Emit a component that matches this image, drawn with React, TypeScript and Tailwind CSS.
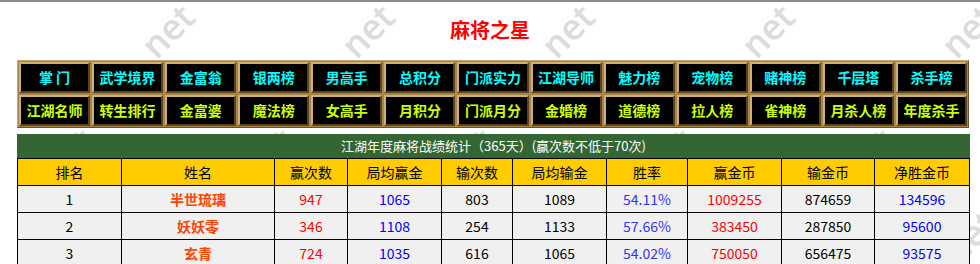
import React from "react";

const navTop = ["掌 门", "武学境界", "金富翁", "银两榜", "男高手", "总积分", "门派实力", "江湖导师", "魅力榜", "宠物榜", "赌神榜", "千层塔", "杀手榜"];
const navBottom = ["江湖名师", "转生排行", "金富婆", "魔法榜", "女高手", "月积分", "门派月分", "金婚榜", "道德榜", "拉人榜", "雀神榜", "月杀人榜", "年度杀手"];

const heads = ["排名", "姓名", "赢次数", "局均赢金", "输次数", "局均输金", "胜率", "赢金币", "输金币", "净胜金币"];

const rows = [
  { rank: 1, name: "半世琉璃", win: 947, avgWin: 1065, lose: 803, avgLose: 1089, rate: "54.11%", winGold: 1009255, loseGold: 874659, net: 134596 },
  { rank: 2, name: "妖妖零", win: 346, avgWin: 1108, lose: 254, avgLose: 1133, rate: "57.66%", winGold: 383450, loseGold: 287850, net: 95600 },
  { rank: 3, name: "玄青", win: 724, avgWin: 1035, lose: 616, avgLose: 1065, rate: "54.02%", winGold: 750050, loseGold: 656475, net: 93575 },
];

// faint diagonal "net" watermarks behind the page
const marks = [
  { x: 160, y: 26 }, { x: 360, y: 26 }, { x: 560, y: 26 }, { x: 760, y: 26 }, { x: 960, y: 26 },
  { x: 60, y: 150 }, { x: 260, y: 150 }, { x: 460, y: 150 }, { x: 660, y: 150 }, { x: 860, y: 150 }, { x: 962, y: 232 },
];

const NavCell = ({ label, color }: { label: string; color: string }) => (
  <div className="h-[31px] bg-black border-2 border-t-[#d0b070] border-l-[#d0b070] border-b-[#5c4420] border-r-[#5c4420] flex items-center justify-center">
    <span className={`text-[14px] font-bold whitespace-nowrap ${color}`}>{label}</span>
  </div>
);

const cell = "h-[27px] border-r border-b border-black flex items-center justify-center";

export default function App() {
  return (
    <div
      className="relative w-[980px] h-[264px] overflow-hidden bg-white border-t-2 border-[#8c8c8c]"
      style={{ fontFamily: '"Noto Sans CJK SC", "Liberation Sans", sans-serif' }}
    >
      <div className="absolute inset-0 pointer-events-none">
        {marks.map((m, i) => (
          <span
            key={i}
            className="absolute text-[36px] leading-[36px] font-semibold text-[#dcdcdc] -rotate-45 origin-bottom-left select-none"
            style={{ left: m.x, top: m.y, fontFamily: '"Open Sans", sans-serif' }}
          >
            net
          </span>
        ))}
      </div>

      <div className="relative">
        <h1 className="h-[58px] pt-[14px] text-center text-[20px] font-bold text-[#ff0000] leading-[28px]">麻将之星</h1>

        <div className="ml-[17px] w-[952px] bg-[#a4854a] border border-t-[#c8a868] border-l-[#c8a868] border-b-[#6a5026] border-r-[#6a5026] grid grid-cols-13 gap-[2px] p-px">
          {navTop.map((l) => (
            <NavCell key={l} label={l} color="text-[#00ffff]" />
          ))}
          {navBottom.map((l) => (
            <NavCell key={l} label={l} color="text-[#ccff00]" />
          ))}
        </div>

        <div className="ml-[17px] mt-[6px] w-[953px]">
          <div className="h-[24px] bg-[#336633] text-white text-[13px] flex items-center justify-center">
            江湖年度麻将战绩统计（365天）(赢次数不低于70次)
          </div>
          <div className="grid grid-cols-[104px_153px_73px_94px_71px_94px_81px_94px_93px_95px] border-l border-t border-black text-[14px]">
            {heads.map((h) => (
              <div key={h} className={`${cell} bg-[#ffcc00] text-black`}>
                {h}
              </div>
            ))}
            {rows.map((r) => (
              <React.Fragment key={r.rank}>
                <div className={`${cell} bg-[#f0f0f0] text-black`}>{r.rank}</div>
                <div className={`${cell} bg-[#f0f0f0] text-[#ff4400] font-bold`}>{r.name}</div>
                <div className={`${cell} bg-[#f0f0f0] text-[#ff0000]`}>{r.win}</div>
                <div className={`${cell} bg-[#f0f0f0] text-[#0000ff]`}>{r.avgWin}</div>
                <div className={`${cell} bg-[#f0f0f0] text-black`}>{r.lose}</div>
                <div className={`${cell} bg-[#f0f0f0] text-black`}>{r.avgLose}</div>
                <div className={`${cell} bg-[#f0f0f0] text-[#3333ff]`}>{r.rate}</div>
                <div className={`${cell} bg-[#f0f0f0] text-[#ff0000]`}>{r.winGold}</div>
                <div className={`${cell} bg-[#f0f0f0] text-black`}>{r.loseGold}</div>
                <div className={`${cell} bg-[#f0f0f0] text-[#0000ff]`}>{r.net}</div>
              </React.Fragment>
            ))}
          </div>
        </div>
      </div>
    </div>
  );
}
